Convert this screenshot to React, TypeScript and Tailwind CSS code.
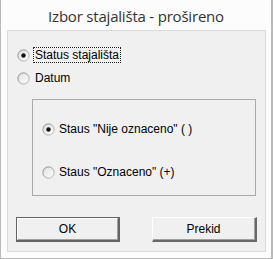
import React from "react";

function Radio({ checked }: { checked?: boolean }) {
  return (
    <svg width="13" height="13" viewBox="0 0 13 13" className="shrink-0">
      <defs>
        <linearGradient id="rb" x1="0" y1="0" x2="1" y2="1">
          <stop offset="0" stopColor="#7f8080" />
          <stop offset="1" stopColor="#c0c0c0" />
        </linearGradient>
        <linearGradient id="rf" x1="0" y1="0" x2="1" y2="1">
          <stop offset="0" stopColor="#dedede" />
          <stop offset="1" stopColor="#ffffff" />
        </linearGradient>
      </defs>
      <circle cx="6.5" cy="6.5" r="5.6" fill="url(#rf)" stroke="url(#rb)" strokeWidth="1" />
      {checked && <circle cx="6.5" cy="6.5" r="2.2" fill="#111" />}
    </svg>
  );
}

export default function App() {
  const font = { fontFamily: '"Liberation Sans", Arial, sans-serif' };
  return (
    <div
      className="w-[273px] h-[259px] bg-[#fcfcfc] border-l border-r-2 border-b border-[#b9b9b9] flex flex-col text-[#000] text-[12px] leading-[14px]"
      style={font}
    >
      <div
        className="h-[30px] flex items-center justify-center text-[15px] tracking-[-0.2px] text-[#333] pt-[1px]"
        style={{ fontFamily: '"Open Sans", "Noto Sans", sans-serif' }}
      >
        Izbor stajališta - prošireno
      </div>
      <div className="ml-[6px] w-[259px] h-[222px] border border-[#dadada] bg-[#f0f0f0] flex flex-col">
        <div className="mt-[16px] pl-[9px] h-[16px] flex items-center gap-[3px]">
          <Radio checked />
          <span className="border border-dotted border-[#222] px-[1px] h-[16px] flex items-center">
            Status stajališta
          </span>
        </div>
        <div className="mt-[7px] pl-[9px] h-[16px] flex items-center gap-[4px]">
          <Radio />
          <span className="px-[1px]">Datum</span>
        </div>
        <div className="mt-[13px] ml-[24px] w-[224px] h-[97px] border border-[#a9a9a9] flex flex-col">
          <div className="mt-[21px] pl-[9px] h-[16px] flex items-center gap-[4px]">
            <Radio checked />
            <span>Staus "Nije oznaceno" ( )</span>
          </div>
          <div className="mt-[27px] pl-[9px] h-[16px] flex items-center gap-[4px]">
            <Radio />
            <span>Staus "Oznaceno" (+)</span>
          </div>
        </div>
        <div className="mt-[21px] ml-[8px] flex gap-[32px]">
          <div className="w-[104px] h-[25px] border border-[#646464] border-r-2 border-b-2 bg-[#f0f0f0]">
            <div className="w-full h-full border-l border-t border-white border-r border-b border-r-[#a0a0a0] border-b-[#a0a0a0] flex items-center justify-center">
              OK
            </div>
          </div>
          <div className="w-[105px] h-[25px] border-l border-t border-white border-r-2 border-b-2 border-r-[#696969] border-b-[#696969] bg-[#f0f0f0]">
            <div className="w-full h-full border-r border-b border-[#a0a0a0] flex items-center justify-center">
              Prekid
            </div>
          </div>
        </div>
      </div>
    </div>
  );
}
